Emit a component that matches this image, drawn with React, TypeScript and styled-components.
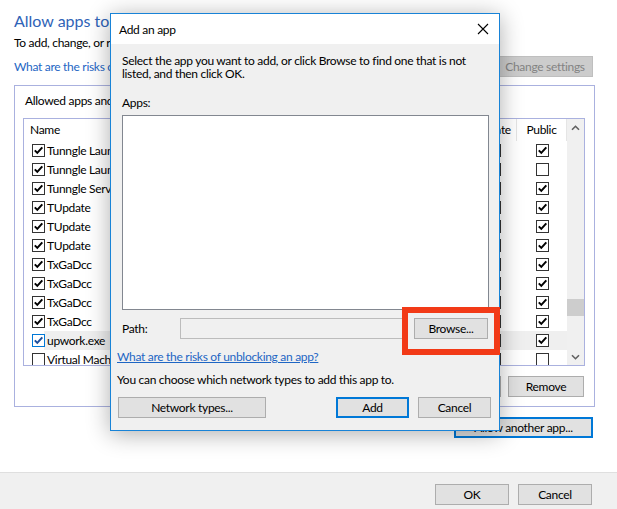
import styled, { createGlobalStyle } from "styled-components";

const GlobalStyle = createGlobalStyle`
  html, body {
    margin: 0;
    padding: 0;
    background: #ffffff;
  }
  body {
    font-family: Lato, "Noto Sans", sans-serif;
    font-size: 12px;
    letter-spacing: -0.3px;
    color: #000000;
  }
  * {
    box-sizing: border-box;
  }
`;

type AppRow = {
  name: string;
  priv: boolean;
  pub: boolean;
  enabled: boolean;
  selected?: boolean;
};

const rows: AppRow[] = [
  { name: "Tunngle Launcher", enabled: true, priv: true, pub: true },
  { name: "Tunngle Launcher", enabled: true, priv: true, pub: false },
  { name: "Tunngle Service", enabled: true, priv: true, pub: true },
  { name: "TUpdate", enabled: true, priv: true, pub: true },
  { name: "TUpdate", enabled: true, priv: true, pub: true },
  { name: "TUpdate", enabled: true, priv: true, pub: true },
  { name: "TxGaDcc", enabled: true, priv: true, pub: true },
  { name: "TxGaDcc", enabled: true, priv: true, pub: true },
  { name: "TxGaDcc", enabled: true, priv: true, pub: true },
  { name: "TxGaDcc", enabled: true, priv: true, pub: true },
  { name: "upwork.exe", enabled: true, priv: true, pub: true, selected: true },
  { name: "Virtual Machine Monitoring", enabled: false, priv: false, pub: false },
];

function Check({ checked, active }: { checked: boolean; active?: boolean }) {
  return (
    <Box $active={active}>
      {checked && (
        <svg width="11" height="11" viewBox="0 0 11 11">
          <path
            d="M1.8 5.4 L4.3 7.9 L9.3 2.4"
            fill="none"
            stroke={active ? "#1c4f9c" : "#000"}
            strokeWidth="2"
          />
        </svg>
      )}
    </Box>
  );
}

function Chevron({ down }: { down?: boolean }) {
  return (
    <svg width="9" height="6" viewBox="0 0 9 6">
      <path
        d={down ? "M1 1.2 L4.5 4.7 L8 1.2" : "M1 4.8 L4.5 1.3 L8 4.8"}
        fill="none"
        stroke="#606060"
        strokeWidth="1.6"
      />
    </svg>
  );
}

export default function App() {
  return (
    <>
      <GlobalStyle />
      <Page>
        <Main>
          <Title>Allow apps to communicate through Windows Defender Firewall</Title>
          <Subtitle>
            To add, change, or remove allowed apps and ports, click Change settings.
          </Subtitle>
          <LinkRow>
            <Link>What are the risks of allowing an app to communicate?</Link>
            <Button $width={96} disabled>
              Change settings
            </Button>
          </LinkRow>
          <GroupBox>
            <GroupLabel>Allowed apps and features:</GroupLabel>
            <ListView>
              <Table>
                <HeaderRow>
                  <HeaderCell>Name</HeaderCell>
                  <HeaderCell $center>Private</HeaderCell>
                  <HeaderCell $center>Public</HeaderCell>
                </HeaderRow>
                {rows.map((r, i) => (
                  <Row key={i} $selected={r.selected}>
                    <NameCell>
                      <Check checked={r.enabled} active={r.selected} />
                      <NameText>{r.name}</NameText>
                    </NameCell>
                    <CheckCell>
                      <Check checked={r.priv} />
                    </CheckCell>
                    <CheckCell>
                      <Check checked={r.pub} />
                    </CheckCell>
                  </Row>
                ))}
              </Table>
              <ScrollBar>
                <ScrollArrow>
                  <Chevron />
                </ScrollArrow>
                <Track>
                  <Thumb $offset={163} />
                </Track>
                <ScrollArrow>
                  <Chevron down />
                </ScrollArrow>
              </ScrollBar>
            </ListView>
            <GroupButtons>
              <Button $width={76}>Details...</Button>
              <Button $width={76}>Remove</Button>
            </GroupButtons>
          </GroupBox>
          <AllowRow>
            <Button $width={139} $focused>
              Allow another app...
            </Button>
          </AllowRow>
        </Main>
        <Footer>
          <Button $width={74}>OK</Button>
          <Button $width={74}>Cancel</Button>
        </Footer>

        <Dialog>
          <TitleBar>
            <span>Add an app</span>
            <CloseButton>
              <svg width="12" height="12" viewBox="0 0 12 12">
                <path d="M1 1 L11 11 M11 1 L1 11" stroke="#000" strokeWidth="1.1" />
              </svg>
            </CloseButton>
          </TitleBar>
          <DialogBody>
            <Description>
              Select the app you want to add, or click Browse to find one that is not
              <br />
              listed, and then click OK.
            </Description>
            <FieldLabel>Apps:</FieldLabel>
            <AppsList />
            <PathRow>
              <PathLabel>Path:</PathLabel>
              <PathInput />
              <Button $width={74}>Browse...</Button>
            </PathRow>
            <DialogLink>What are the risks of unblocking an app?</DialogLink>
            <Note>You can choose which network types to add this app to.</Note>
            <DialogButtons>
              <Button $width={148}>Network types...</Button>
              <Spacer />
              <Button $width={73} $focused>
                Add
              </Button>
              <Button $width={73}>Cancel</Button>
            </DialogButtons>
          </DialogBody>
          <Highlight />
        </Dialog>
      </Page>
    </>
  );
}

const Page = styled.div`
  position: relative;
  width: 617px;
  height: 509px;
  overflow: hidden;
  display: flex;
  flex-direction: column;
  background: #ffffff;
`;

const Main = styled.div`
  height: 472px;
  padding: 11px 22px 0 14px;
  display: flex;
  flex-direction: column;
`;

const Title = styled.div`
  font-size: 16px;
  letter-spacing: 0;
  line-height: 20px;
  color: #2f63b7;
  white-space: nowrap;
`;

const Subtitle = styled.div`
  margin-top: 4px;
  line-height: 16px;
  white-space: nowrap;
`;

const LinkRow = styled.div`
  margin-top: 5px;
  display: flex;
  align-items: center;
  justify-content: space-between;
  padding-right: 2px;
`;

const Link = styled.span`
  color: #1e66c4;
  white-space: nowrap;
`;

const Button = styled.button<{ $width: number; $focused?: boolean }>`
  width: ${(p) => p.$width}px;
  height: 21px;
  padding: 0;
  font-family: inherit;
  font-size: 12px;
  letter-spacing: inherit;
  color: #000;
  background: #e1e1e1;
  border: 1px solid ${(p) => (p.$focused ? "#0078d7" : "#adadad")};
  box-shadow: ${(p) => (p.$focused ? "inset 0 0 0 1px #0078d7" : "none")};
  white-space: nowrap;

  &:disabled {
    background: #cccccc;
    border-color: #bfbfbf;
    color: #838383;
  }
`;

const GroupBox = styled.div`
  margin-top: 8px;
  width: 581px;
  height: 322px;
  border: 1px solid #aab1df;
  padding: 7px 9px 0 8px;
  display: flex;
  flex-direction: column;
`;

const GroupLabel = styled.div`
  line-height: 16px;
  margin-left: 2px;
  white-space: nowrap;
`;

const ListView = styled.div`
  margin-top: 9px;
  width: 562px;
  height: 248px;
  border: 1px solid #aab1df;
  display: flex;
  overflow: hidden;
`;

const Table = styled.div`
  flex: 1;
  display: flex;
  flex-direction: column;
  overflow: hidden;
`;

const columns = "1fr 46px 50px";

const HeaderRow = styled.div`
  flex-shrink: 0;
  height: 22px;
  display: grid;
  grid-template-columns: ${columns};
`;

const HeaderCell = styled.div<{ $center?: boolean }>`
  display: flex;
  align-items: center;
  justify-content: ${(p) => (p.$center ? "center" : "flex-start")};
  padding-left: ${(p) => (p.$center ? "0" : "6px")};
  border-right: 1px solid #e5e5e5;
  line-height: 16px;
`;

const Row = styled.div<{ $selected?: boolean }>`
  flex-shrink: 0;
  height: 19px;
  display: grid;
  grid-template-columns: ${columns};
  background: ${(p) =>
    p.$selected ? "linear-gradient(to right, transparent 20px, #efefef 20px)" : "none"};
`;

const NameCell = styled.div`
  display: flex;
  align-items: center;
  padding-left: 8px;
  gap: 2px;
  overflow: hidden;
`;

const NameText = styled.span`
  white-space: nowrap;
`;

const CheckCell = styled.div`
  display: flex;
  align-items: center;
  justify-content: center;
`;

const Box = styled.span<{ $active?: boolean }>`
  flex-shrink: 0;
  width: 13px;
  height: 13px;
  border: 1px solid ${(p) => (p.$active ? "#0078d7" : "#333333")};
  background: #ffffff;
  display: flex;
  align-items: center;
  justify-content: center;
`;

const ScrollBar = styled.div`
  width: 17px;
  flex-shrink: 0;
  background: #f0f0f0;
  display: flex;
  flex-direction: column;
`;

const ScrollArrow = styled.div`
  height: 17px;
  display: flex;
  align-items: center;
  justify-content: center;
`;

const Track = styled.div`
  flex: 1;
`;

const Thumb = styled.div<{ $offset: number }>`
  margin-top: ${(p) => p.$offset}px;
  height: 17px;
  background: #cdcdcd;
`;

const GroupButtons = styled.div`
  margin-top: 10px;
  display: flex;
  justify-content: flex-end;
  gap: 7px;
  padding-right: 1px;
`;

const AllowRow = styled.div`
  margin-top: 10px;
  display: flex;
  justify-content: flex-end;
  padding-right: 2px;
`;

const Footer = styled.div`
  flex: 1;
  border-top: 1px solid #dfdfdf;
  background: #f0f0f0;
  display: flex;
  justify-content: flex-end;
  align-items: flex-start;
  gap: 9px;
  padding: 11px 25px 0 0;
`;

const Dialog = styled.div`
  position: absolute;
  left: 110px;
  top: 13px;
  width: 390px;
  height: 418px;
  border: 1px solid #1883d7;
  background: #f0f0f0;
  box-shadow: 0 3px 22px rgba(0, 0, 0, 0.32);
  display: flex;
  flex-direction: column;
`;

const TitleBar = styled.div`
  height: 30px;
  flex-shrink: 0;
  background: #ffffff;
  display: flex;
  align-items: center;
  justify-content: space-between;
  padding: 0 10px 0 8px;
`;

const CloseButton = styled.span`
  display: flex;
  align-items: center;
`;

const DialogBody = styled.div`
  flex: 1;
  padding: 10px 8px 0 6px;
  display: flex;
  flex-direction: column;
`;

const Description = styled.div`
  padding-left: 5px;
  line-height: 13px;
  white-space: nowrap;
`;

const FieldLabel = styled.div`
  margin-top: 15px;
  padding-left: 5px;
  line-height: 16px;
`;

const AppsList = styled.div`
  margin: 4px 0 0 5px;
  width: 367px;
  height: 195px;
  background: #ffffff;
  border: 1px solid #828790;
`;

const PathRow = styled.div`
  margin-top: 8px;
  padding-left: 5px;
  display: flex;
  align-items: center;
`;

const PathLabel = styled.span`
  width: 58px;
`;

const PathInput = styled.div`
  width: 224px;
  height: 21px;
  margin-right: 10px;
  border: 1px solid #bcbcbc;
  background: #f0f0f0;
`;

const DialogLink = styled.span`
  margin-top: 10px;
  line-height: 16px;
  color: #1e66c4;
  text-decoration: underline;
  white-space: nowrap;
`;

const Note = styled.div`
  margin-top: 7px;
  line-height: 16px;
  white-space: nowrap;
`;

const DialogButtons = styled.div`
  margin-top: 9px;
  padding-left: 1px;
  display: flex;
  gap: 9px;
`;

const Spacer = styled.div`
  flex: 1;
`;

const Highlight = styled.div`
  position: absolute;
  left: 291px;
  top: 293px;
  width: 98px;
  height: 48px;
  border: 6px solid #f23a17;
  pointer-events: none;
`;
